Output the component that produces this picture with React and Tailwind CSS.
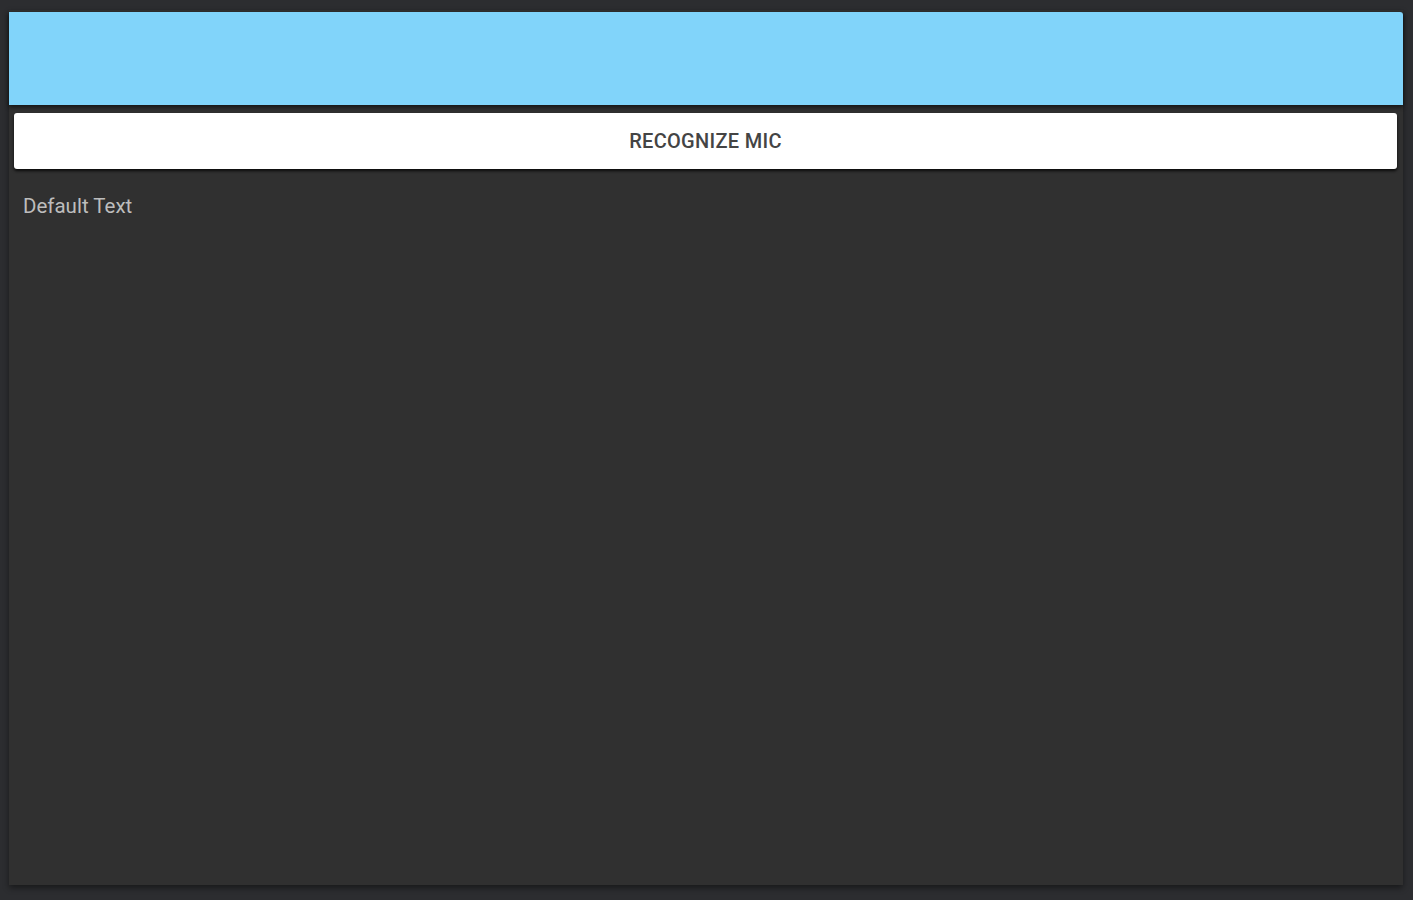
import React from 'react';

const App = () => {
  return (
    <div className="w-[1413px] h-[900px] bg-[#2c2d30] pt-[10px] pl-[9px] pr-[10px] pb-[15px] font-['Roboto',sans-serif]">
      <div className="h-full bg-[#303030] shadow-[0_3px_6px_rgba(0,0,0,0.45)] flex flex-col">
        {/* Top bar */}
        <div className="h-[93px] mt-[2px] bg-[#81d4fa] rounded-tr-[3px] shadow-[0_2px_4px_rgba(0,0,0,0.6)]" />

        {/* Action button */}
        <div className="px-[5px] pt-[8px] pr-[6px]">
          <button className="w-full h-[56px] bg-white rounded-[3px] shadow-[0_2px_3px_rgba(0,0,0,0.8)] text-[20px] font-medium text-[#444444] tracking-[0.3px] flex items-center justify-center">
            RECOGNIZE MIC
          </button>
        </div>

        {/* Output */}
        <div className="pl-[14px] pt-[27px] text-[20.5px] text-[#bdbdbd] leading-none">
          Default Text
        </div>
      </div>
    </div>
  );
};

export default App;
